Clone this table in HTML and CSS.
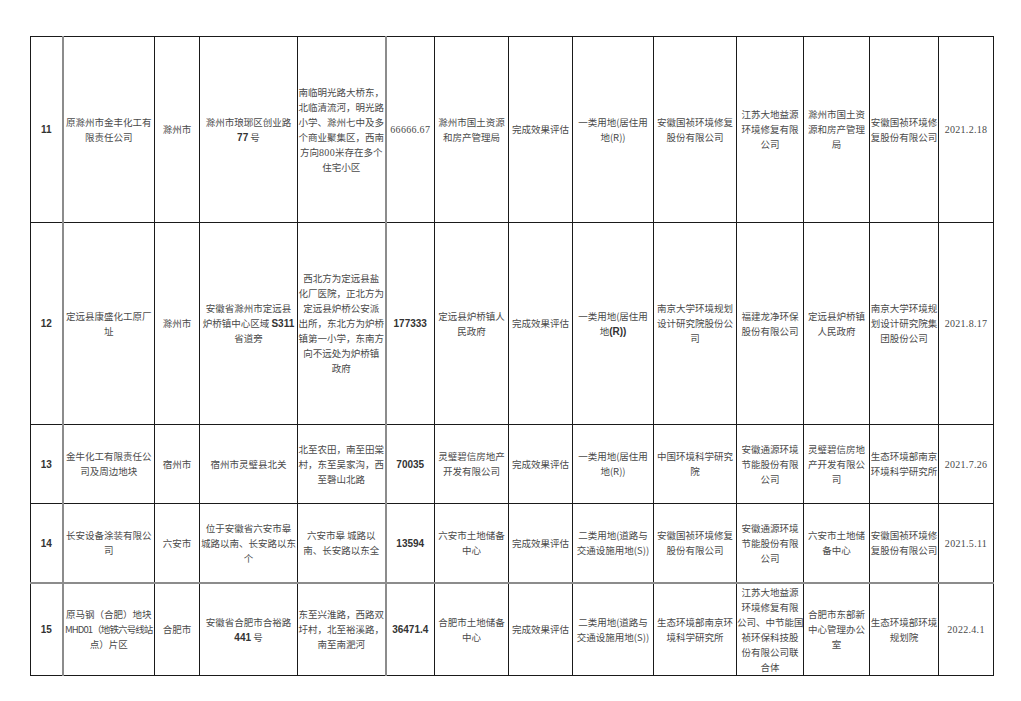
FILE: index.html
```html
<!DOCTYPE html>
<html lang="zh-CN">
<head>
<meta charset="utf-8">
<title>表格</title>
<link rel="stylesheet" href="styles.css">
</head>
<body>
<table class="grid">
<colgroup>
<col class="c1"><col class="c2"><col class="c3"><col class="c4"><col class="c5"><col class="c6"><col class="c7"><col class="c8"><col class="c9"><col class="c10"><col class="c11"><col class="c12"><col class="c13"><col class="c14">
</colgroup>
<tbody>
<tr class="r11">
<td class="num g">11</td>
<td>原滁州市金丰化工有<br>限责任公司</td>
<td>滁州市</td>
<td>滁州市琅琊区创业路<br><span class="num">77</span> 号</td>
<td class="g">南临明光路大桥东，<br>北临清流河，明光路<br>小学、滁州七中及多<br>个商业聚集区，西南<br>方向<span class="ser">800</span>米存在多个<br>住宅小区</td>
<td class="ser">66666.67</td>
<td>滁州市国土资源<br>和房产管理局</td>
<td>完成效果评估</td>
<td>一类用地(居住用<br>地(R))</td>
<td>安徽国祯环境修复<br>股份有限公司</td>
<td>江苏大地益源<br>环境修复有限<br>公司</td>
<td>滁州市国土资<br>源和房产管理<br>局</td>
<td>安徽国祯环境修<br>复股份有限公司</td>
<td class="ser">2021.2.18</td>
</tr>
<tr class="r12">
<td class="num g">12</td>
<td>定远县康盛化工原厂<br>址</td>
<td>滁州市</td>
<td>安徽省滁州市定远县<br>炉桥镇中心区域 <span class="num">S311</span><br>省道旁</td>
<td class="g">西北方为定远县盐<br>化厂医院，正北方为<br>定远县炉桥公安派<br>出所，东北方为炉桥<br>镇第一小学，东南方<br>向不远处为炉桥镇<br>政府</td>
<td class="num">177333</td>
<td>定远县炉桥镇人<br>民政府</td>
<td>完成效果评估</td>
<td>一类用地(居住用<br>地<span class="num">(R))</span></td>
<td>南京大学环境规划<br>设计研究院股份公<br>司</td>
<td>福建龙净环保<br>股份有限公司</td>
<td>定远县炉桥镇<br>人民政府</td>
<td>南京大学环境规<br>划设计研究院集<br>团股份公司</td>
<td class="ser">2021.8.17</td>
</tr>
<tr class="r13">
<td class="num g">13</td>
<td>金牛化工有限责任公<br>司及周边地块</td>
<td>宿州市</td>
<td>宿州市灵璧县北关</td>
<td class="g">北至农田，南至田棠<br>村，东至吴家沟，西<br>至磬山北路</td>
<td class="num">70035</td>
<td>灵璧碧信房地产<br>开发有限公司</td>
<td>完成效果评估</td>
<td>一类用地(居住用<br>地(R))</td>
<td>中国环境科学研究<br>院</td>
<td>安徽通源环境<br>节能股份有限<br>公司</td>
<td>灵璧碧信房地<br>产开发有限公<br>司</td>
<td>生态环境部南京<br>环境科学研究所</td>
<td class="ser">2021.7.26</td>
</tr>
<tr class="r14">
<td class="num g">14</td>
<td>长安设备涂装有限公<br>司</td>
<td>六安市</td>
<td>位于安徽省六安市皋<br>城路以南、长安路以东<br>个</td>
<td class="g">六安市皋 城路以<br>南、长安路以东全</td>
<td class="num">13594</td>
<td>六安市土地储备<br>中心</td>
<td>完成效果评估</td>
<td>二类用地(道路与<br>交通设施用地(S))</td>
<td>安徽国祯环境修复<br>股份有限公司</td>
<td>安徽通源环境<br>节能股份有限<br>公司</td>
<td>六安市土地储<br>备中心</td>
<td>安徽国祯环境修<br>复股份有限公司</td>
<td class="ser">2021.5.11</td>
</tr>
<tr class="r15">
<td class="num g">15</td>
<td>原马钢（合肥）地块<br><span class="tight">MHD01（地铁六号线站</span><br>点）片区</td>
<td>合肥市</td>
<td>安徽省合肥市合裕路<br><span class="num">441</span> 号</td>
<td class="g">东至兴淮路，西路双<br>圩村，北至裕溪路，<br>南至南淝河</td>
<td class="num">36471.4</td>
<td>合肥市土地储备<br>中心</td>
<td>完成效果评估</td>
<td>二类用地(道路与<br>交通设施用地(S))</td>
<td>生态环境部南京环<br>境科学研究所</td>
<td>江苏大地益源<br>环境修复有限<br>公司、中节能国<br>祯环保科技股<br>份有限公司联<br>合体</td>
<td>合肥市东部新<br>中心管理办公<br>室</td>
<td>生态环境部环境<br>规划院</td>
<td class="ser">2022.4.1</td>
</tr>
</tbody>
</table>
</body>
</html>
```

FILE: styles.css
```css
html, body {
  margin: 0;
  padding: 0;
  background: #ffffff;
}

body {
  padding: 36px 0 0 30px;
}

.grid {
  border-collapse: collapse;
  table-layout: fixed;
  width: 964px;
  font-family: "Noto Sans CJK SC", "Noto Sans", sans-serif;
  font-size: 9.5px;
  line-height: 15px;
  color: #4a4a4a;
}

.grid td {
  border: 1px solid #1a1a1a;
  padding: 0;
  text-align: center;
  vertical-align: middle;
  white-space: nowrap;
  overflow: visible;
}

.grid td.g {
  border-right: 2px solid #8c8c8c;
}

.c1 { width: 32px; }
.c2 { width: 92px; }
.c3 { width: 45px; }
.c4 { width: 98px; }
.c5 { width: 88px; }
.c6 { width: 49px; }
.c7 { width: 74px; }
.c8 { width: 64px; }
.c9 { width: 81px; }
.c10 { width: 83px; }
.c11 { width: 67px; }
.c12 { width: 66px; }
.c13 { width: 69px; }
.c14 { width: 55px; }

.r11 td { height: 185px; }
.r12 td { height: 201px; }
.r13 td { height: 78px; }
.r14 td { height: 78px; }
.r15 td { height: 91px; }

.r15 td {
  border-top: 2px solid #8c8c8c;
}

.num {
  font-family: "Liberation Sans", Arial, sans-serif;
  font-size: 10px;
  font-weight: bold;
  color: #333;
}

.ser {
  font-family: "Liberation Serif", "Times New Roman", serif;
  font-size: 10px;
  letter-spacing: 0.3px;
}

.tight {
  letter-spacing: -0.9px;
}
```
